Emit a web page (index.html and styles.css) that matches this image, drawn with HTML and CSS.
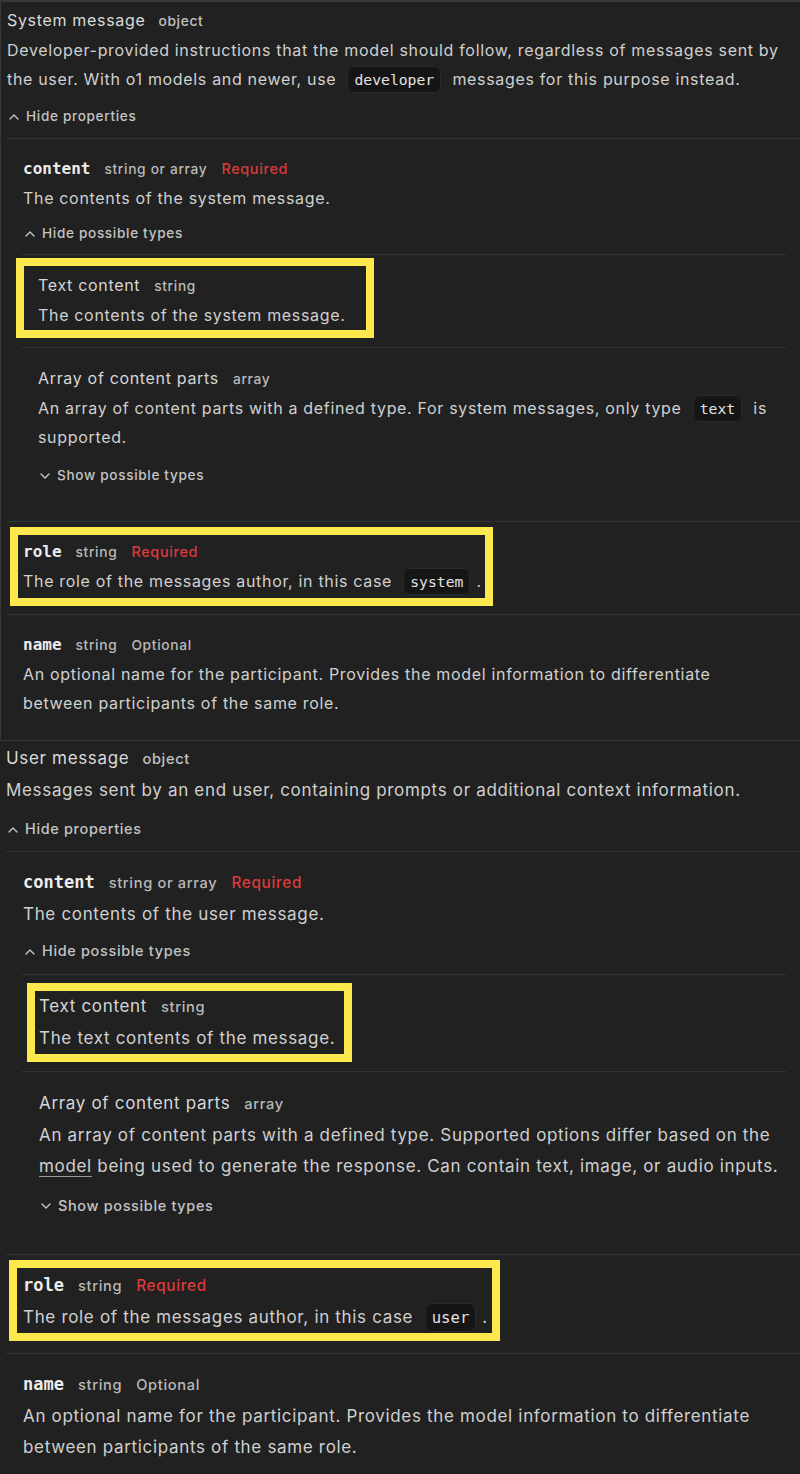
FILE: index.html
```html
<!DOCTYPE html>
<html lang="en">
<head>
<meta charset="utf-8">
<title>Messages</title>
<link rel="stylesheet" href="styles.css">
</head>
<body>
<section class="panel panel--sys">
  <div class="head"><span class="title">System message</span><span class="kind">object</span></div>
  <p class="desc">Developer-provided instructions that the model should follow, regardless of messages sent by the user. With o1 models and newer, use <code class="chip">developer</code> messages for this purpose instead.</p>
  <div class="toggle toggle--top"><svg class="chev" viewBox="0 0 10 6"><polyline points="1,5 5,1 9,5"/></svg><span>Hide properties</span></div>
  <div class="props">
    <div class="prop prop--nested">
      <div class="phead"><span class="pname">content</span><span class="ptype">string or array</span><span class="req">Required</span></div>
      <p class="desc">The contents of the system message.</p>
      <div class="toggle"><svg class="chev" viewBox="0 0 10 6"><polyline points="1,5 5,1 9,5"/></svg><span>Hide possible types</span></div>
      <div class="types">
        <div class="type">
          <div class="hl hl--text1">
            <div class="thead"><span class="tname">Text content</span><span class="ptype">string</span></div>
            <p class="desc">The contents of the system message.</p>
          </div>
        </div>
        <div class="type">
          <div class="thead"><span class="tname">Array of content parts</span><span class="ptype">array</span></div>
          <p class="desc">An array of content parts with a defined type. For system messages, only type <code class="chip">text</code> is supported.</p>
          <div class="toggle toggle--show"><svg class="chev" viewBox="0 0 10 6"><polyline points="1,1 5,5 9,1"/></svg><span>Show possible types</span></div>
        </div>
      </div>
    </div>
    <div class="prop">
      <div class="hl hl--role1">
        <div class="phead"><span class="pname">role</span><span class="ptype">string</span><span class="req">Required</span></div>
        <p class="desc">The role of the messages author, in this case <code class="chip">system</code>.</p>
      </div>
    </div>
    <div class="prop prop--last">
      <div class="phead"><span class="pname">name</span><span class="ptype">string</span><span class="opt">Optional</span></div>
      <p class="desc desc--narrow">An optional name for the participant. Provides the model information to differentiate between participants of the same role.</p>
    </div>
  </div>
</section>

<section class="panel panel--user">
  <div class="head"><span class="title">User message</span><span class="kind">object</span></div>
  <p class="desc">Messages sent by an end user, containing prompts or additional context information.</p>
  <div class="toggle toggle--top"><svg class="chev" viewBox="0 0 10 6"><polyline points="1,5 5,1 9,5"/></svg><span>Hide properties</span></div>
  <div class="props">
    <div class="prop prop--nested">
      <div class="phead"><span class="pname">content</span><span class="ptype">string or array</span><span class="req">Required</span></div>
      <p class="desc">The contents of the user message.</p>
      <div class="toggle"><svg class="chev" viewBox="0 0 10 6"><polyline points="1,5 5,1 9,5"/></svg><span>Hide possible types</span></div>
      <div class="types">
        <div class="type">
          <div class="hl hl--text2">
            <div class="thead"><span class="tname">Text content</span><span class="ptype">string</span></div>
            <p class="desc">The text contents of the message.</p>
          </div>
        </div>
        <div class="type">
          <div class="thead"><span class="tname">Array of content parts</span><span class="ptype">array</span></div>
          <p class="desc">An array of content parts with a defined type. Supported options differ based on the <a class="link" href="#">model</a> being used to generate the response. Can contain text, image, or audio inputs.</p>
          <div class="toggle toggle--show"><svg class="chev" viewBox="0 0 10 6"><polyline points="1,1 5,5 9,1"/></svg><span>Show possible types</span></div>
        </div>
      </div>
    </div>
    <div class="prop">
      <div class="hl hl--role2">
        <div class="phead"><span class="pname">role</span><span class="ptype">string</span><span class="req">Required</span></div>
        <p class="desc">The role of the messages author, in this case <code class="chip">user</code>.</p>
      </div>
    </div>
    <div class="prop prop--last">
      <div class="phead"><span class="pname">name</span><span class="ptype">string</span><span class="opt">Optional</span></div>
      <p class="desc">An optional name for the participant. Provides the model information to differentiate between participants of the same role.</p>
    </div>
  </div>
</section>
</body>
</html>
```

FILE: styles.css
```css
* { box-sizing: border-box; }

html, body {
  margin: 0;
  background: #212121;
}

body {
  font-family: Inter, "Noto Sans", sans-serif;
  color: #d0d0d0;
  letter-spacing: 0.042em;
  -webkit-font-smoothing: antialiased;
}

.panel {
  font-size: 16px;
  line-height: 29px;
  padding: 4px 14px 0 6px;
}

.panel--sys {
  border-top: 2px solid #383838;
  border-left: 1px solid #383838;
}

.panel--user {
  font-size: 17px;
  line-height: 31px;
  border-top: 1px solid #343434;
  padding-top: 2px;
}

.head {
  display: flex;
  align-items: baseline;
  gap: 13px;
}

.title {
  color: #dadada;
}

.kind {
  font-size: 0.86em;
  font-weight: 500;
  color: #c2c2c2;
}

.desc {
  margin: 0;
  color: #d0d0d0;
}

.desc--narrow {
  max-width: 750px;
}

.chip {
  font-family: "DejaVu Sans Mono", monospace;
  font-size: 0.92em;
  letter-spacing: 0;
  color: #e2e2e2;
  background: #151515;
  border: 1px solid #2a2a2a;
  border-radius: 7px;
  padding: 4px 6px;
  margin: 0 6px;
}

.link {
  color: inherit;
  text-decoration: underline;
  text-decoration-color: #9a9a9a;
  text-underline-offset: 4px;
}

.toggle {
  display: flex;
  align-items: center;
  gap: 7px;
  font-size: 0.85em;
  font-weight: 500;
  line-height: 1.45;
  color: #c4c4c4;
  margin-top: 11px;
  padding-left: 2px;
}

.toggle--top {
  margin-top: 13px;
}

.toggle--show {
  margin-top: 14px;
}

.chev {
  width: 10px;
  height: 6px;
  fill: none;
  stroke: #c4c4c4;
  stroke-width: 1.4;
  stroke-linecap: round;
  stroke-linejoin: round;
}

.props {
  margin-top: 11px;
  margin-right: -14px;
}

.prop {
  border-top: 1px solid #333333;
  padding: 15px 14px 18px 16px;
}

.panel--user .prop {
  padding: 15px 14px 20px 17px;
}

.prop--last {
  padding-bottom: 22px;
}

.phead,
.thead {
  display: flex;
  align-items: baseline;
  gap: 14px;
}

.pname {
  font-family: "DejaVu Sans Mono", monospace;
  font-weight: 700;
  font-size: 1em;
  letter-spacing: 0;
  color: #ececec;
}

.tname {
  color: #d6d6d6;
}

.ptype,
.opt {
  font-size: 0.86em;
  font-weight: 500;
  color: #b9b9b9;
}

.req {
  font-size: 0.9em;
  font-weight: 500;
  color: #dc3a3a;
}

.types {
  margin-top: 11px;
  margin-left: -1px;
}

.panel--user .types {
  margin-top: 12px;
}

.type {
  border-top: 1px solid #333333;
  padding: 16px 0 17px 16px;
}

.panel--user .type {
  padding-left: 17px;
}

/* yellow annotation frames */
.hl {
  width: fit-content;
  border: 8px solid #fde84e;
}

.hl--text1 {
  margin: -13px 0 -8px -22px;
  padding: 5px 20px 0 14px;
}

.hl--role1 {
  margin: -10px 0 -10px -13px;
  padding: 2px 3px 2px 5px;
}

.hl--text2 {
  margin: -8px 0 -8px -12px;
  padding: 0 9px 0 4px;
}

.hl--role2 {
  margin: -10px 0 -8px -14px;
  padding: 2px 4px 0 6px;
}
```
